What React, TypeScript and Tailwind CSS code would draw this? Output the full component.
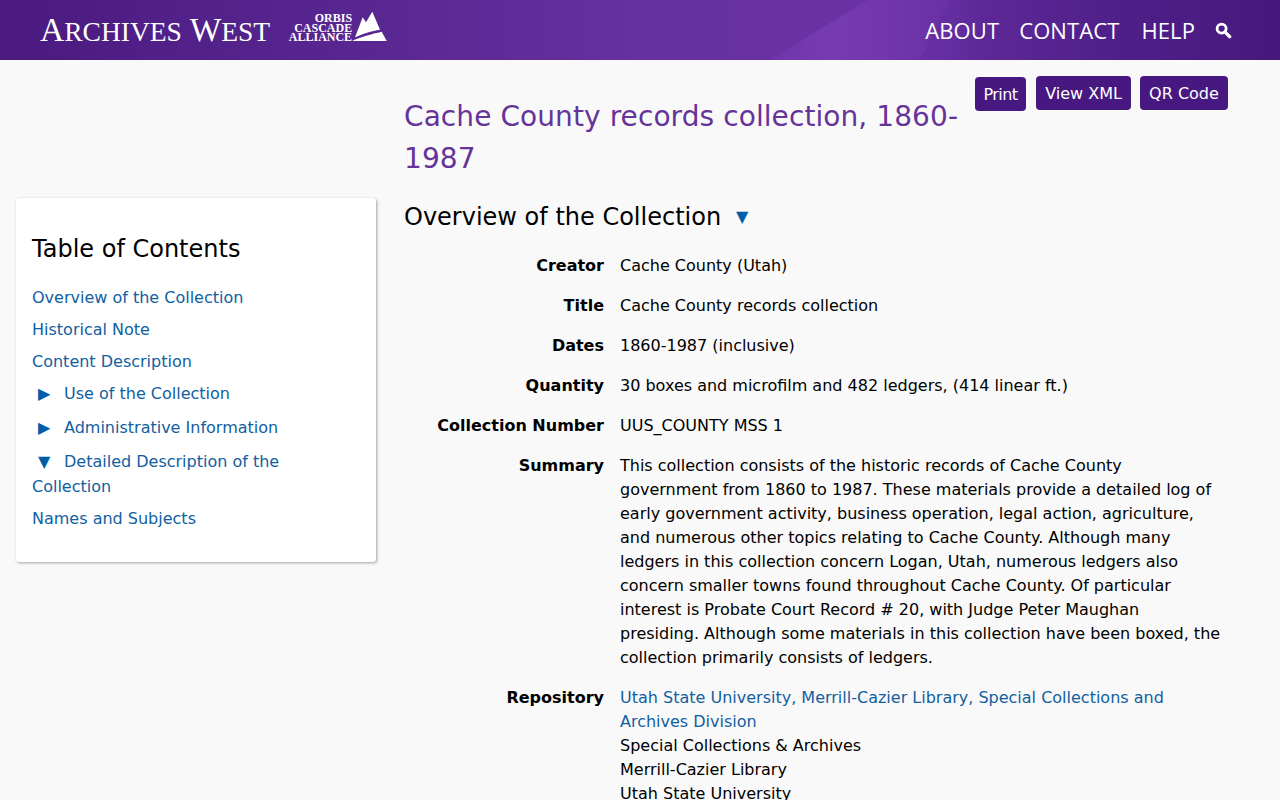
import React from "react";

const Row = ({ label, children }: { label: string; children: React.ReactNode }) => (
  <div className="flex gap-4 mb-4">
    <div className="w-[200px] shrink-0 text-right font-bold">{label}</div>
    <div className="w-[602px]">{children}</div>
  </div>
);

const Tri = ({ down }: { down?: boolean }) => (
  <span className="inline-block w-8 text-[#005ea8] pl-1.5">{down ? "▼" : "▶"}</span>
);

const Btn = ({ children, className }: { children: React.ReactNode; className: string }) => (
  <button className={`bg-[#47187f] text-white rounded-[4px] h-[34px] pt-px ${className}`}>{children}</button>
);

export default function App() {
  return (
    <div className="h-[800px] overflow-hidden bg-[#f9f9f9] text-[16px] leading-6 text-black font-['DejaVu_Sans',sans-serif]">
      <header className="relative h-[60px] overflow-hidden bg-[linear-gradient(90deg,#4a1a80_0%,#57258f_25%,#6530a0_50%,#6a33a5_68%,#642ea0_74%,#5c2897_77%,#4e1f88_88%,#47187c_100%)] flex items-center justify-between pl-10 pr-12 text-white">
        <svg className="absolute inset-0 pointer-events-none" width="1280" height="60" viewBox="0 0 1280 60">
          <defs>
            <linearGradient id="sheen" x1="0" y1="0" x2="1" y2="0">
              <stop offset="0" stopColor="#7a3db3" stopOpacity="0.35" />
              <stop offset="0.35" stopColor="#7a3db3" stopOpacity="0.8" />
              <stop offset="1" stopColor="#6a32a4" stopOpacity="0.75" />
            </linearGradient>
          </defs>
          <polygon points="770,60 868,0 950,0 920,60" fill="url(#sheen)" />
        </svg>
        <div className="relative flex items-start h-[60px]">
          <span className="font-['Liberation_Serif',serif] text-[33.5px] leading-[60px] text-white whitespace-nowrap">
            A<span className="text-[27.5px]">RCHIVES</span> W<span className="text-[27.5px]">EST</span>
          </span>
          <div className="ml-[18px] mt-[14px] font-['Liberation_Serif',serif] font-bold text-[12px] leading-[9.5px] text-right w-[64px]">
            <div>ORBIS</div>
            <div>CASCADE</div>
            <div>ALLIANCE</div>
          </div>
          <svg width="40" height="36" viewBox="12 0 40 36" className="mt-[9px] shrink-0">
            <path d="M12 32 L46.7 32 L41.7 22.7 C32 25 20 28 12 32 Z" fill="#fff" />
            <path d="M15 28.3 L22.7 8.3 L26 13.3 L32.3 2.7 L40 20.7 C32 22 22 25 15 28.3 Z" fill="#fff" />
          </svg>
        </div>
        <nav className="relative flex items-center text-[22px] font-['Open_Sans',sans-serif] tracking-[0.1px]">
          <span>ABOUT</span>
          <span className="ml-[20px]">CONTACT</span>
          <span className="ml-[22px]">HELP</span>
          <svg width="17" height="17" viewBox="0 0 18 18" className="ml-[20px]">
            <circle cx="7" cy="7" r="4.8" fill="none" stroke="#fff" strokeWidth="3" />
            <path d="M10.5 10.5 L15.5 15.5" stroke="#fff" strokeWidth="3.6" strokeLinecap="round" />
          </svg>
        </nav>
      </header>
      <div className="flex pl-4">
        <aside className="w-[360px] shrink-0 mt-[138px] self-start bg-white rounded-[3px] shadow-[1px_1px_3px_rgba(0,0,0,0.35)] px-4 pt-[35px] pb-[31px]">
          <h2 className="text-[24px] leading-8 mb-[21px]">Table of Contents</h2>
          <ul className="text-[#11609f] flex flex-col">
            <li className="mb-2">Overview of the Collection</li>
            <li className="mb-2">Historical Note</li>
            <li className="mb-2">Content Description</li>
            <li className="mb-[10px]"><Tri />Use of the Collection</li>
            <li className="mb-[9px]"><Tri />Administrative Information</li>
            <li className="mb-[8px] leading-[25px]"><Tri down />Detailed Description of the Collection</li>
            <li>Names and Subjects</li>
          </ul>
        </aside>
        <main className="ml-7 w-[824px] pt-4">
          <div className="flex justify-between items-start">
            <h1 className="w-[560px] text-[28px] leading-[42px] tracking-[0.08px] text-[#663399] mt-[20px]">Cache County records collection, 1860-<wbr />1987</h1>
            <div className="flex items-start">
              <Btn className="w-[51px] mt-px tracking-[-0.6px]">Print</Btn>
              <Btn className="w-[95px] ml-[10px]">View XML</Btn>
              <Btn className="w-[88px] ml-[9px]">QR Code</Btn>
            </div>
          </div>
          <h2 className="text-[24px] leading-8 mt-[21px] mb-[21px] flex items-center">
            Overview of the Collection<span className="ml-[15px] text-[16px] text-[#005ea8]">▼</span>
          </h2>
          <Row label="Creator">Cache County (Utah)</Row>
          <Row label="Title">Cache County records collection</Row>
          <Row label="Dates">1860-1987 (inclusive)</Row>
          <Row label="Quantity">30 boxes and microfilm and 482 ledgers, (414 linear ft.)</Row>
          <Row label="Collection Number">UUS_COUNTY MSS 1</Row>
          <Row label="Summary">
            This collection consists of the historic records of Cache County government from 1860 to 1987. These materials provide a detailed log of early government activity, business operation, legal action, agriculture, and numerous other topics relating to Cache County. Although many ledgers in this collection concern Logan, Utah, numerous ledgers also concern smaller towns found throughout Cache County. Of particular interest is Probate Court Record # 20, with Judge Peter Maughan presiding. Although some materials in this collection have been boxed, the collection primarily consists of ledgers.
          </Row>
          <Row label="Repository">
            <div className="text-[#11609f]">Utah State University, Merrill-Cazier Library, Special Collections and Archives Division</div>
            <div>Special Collections &amp; Archives</div>
            <div>Merrill-Cazier Library</div>
            <div>Utah State University</div>
          </Row>
        </main>
      </div>
    </div>
  );
}
